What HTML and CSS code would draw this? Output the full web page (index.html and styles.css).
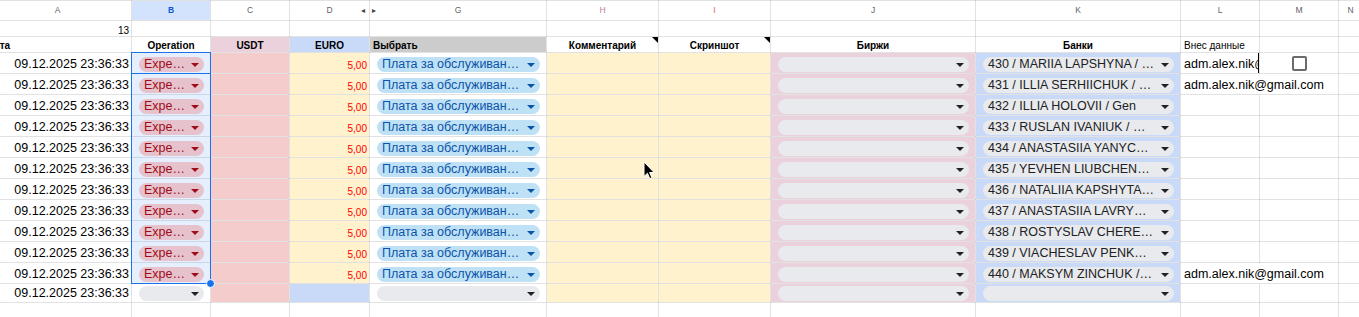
FILE: index.html
```html
<!DOCTYPE html>
<html lang="ru">
  <head>
    <meta charset="UTF-8" />
    <title>Операции</title>
    <link rel="stylesheet" href="styles.css">
  </head>
  <body>
    <div class="sheet">
      <table class="grid">
        <colgroup>
          <col class="w-a" /><col class="w-b" /><col class="w-c" /><col class="w-d" />
          <col class="w-g" /><col class="w-h" /><col class="w-i" /><col class="w-j" />
          <col class="w-k" /><col class="w-l" /><col class="w-m" /><col class="w-n" />
        </colgroup>
        <thead>
          <tr class="colhead">
            <th>A</th>
            <th class="active">B</th>
            <th>C</th>
            <th class="hide-left">D<span class="arr-l">&#9666;</span></th>
            <th class="hide-right"><span class="arr-r">&#9656;</span>G</th>
            <th class="mark-h">H</th>
            <th class="mark-i">I</th>
            <th>J</th>
            <th>K</th>
            <th>L</th>
            <th>M</th>
            <th>N</th>
          </tr>
        </thead>
        <tbody>
          <tr class="r-top">
            <td class="num">13</td>
            <td></td><td></td><td></td><td></td><td></td><td></td><td></td><td></td><td></td><td></td><td></td>
          </tr>
          <tr class="r-head">
            <td class="h-left">Дата</td>
            <td>Operation</td>
            <td class="bg-mauve">USDT</td>
            <td class="bg-blue">EURO</td>
            <td class="h-left bg-grey">Выбрать</td>
            <td class="noted">Комментарий</td>
            <td class="noted">Скриншот</td>
            <td>Биржи</td>
            <td>Банки</td>
            <td class="h-left h-thin">Внес данные</td>
            <td></td>
            <td></td>
          </tr>

          <tr class="row">
            <td class="date">09.12.2025 23:36:33</td>
            <td class="pick"><span class="chip chip-red"><span class="chip-text">Expe…</span><i class="caret"></i></span></td>
            <td class="bg-pink"></td>
            <td class="euro">5,00</td>
            <td class="pick"><span class="chip chip-blue"><span class="chip-text">Плата за обслуживан…</span><i class="caret"></i></span></td>
            <td class="bg-yellow"></td>
            <td class="bg-yellow"></td>
            <td class="pick bg-mauve"><span class="chip chip-grey"><span class="chip-text"></span><i class="caret"></i></span></td>
            <td class="pick bg-blue"><span class="chip chip-grey"><span class="chip-text">430 / MARIIA LAPSHYNA / …</span><i class="caret"></i></span></td>
            <td class="mail editing">adm.alex.nik@gmail.com</td>
            <td class="box"><span class="check"></span></td>
            <td></td>
          </tr>
          <tr class="row">
            <td class="date">09.12.2025 23:36:33</td>
            <td class="pick"><span class="chip chip-red"><span class="chip-text">Expe…</span><i class="caret"></i></span></td>
            <td class="bg-pink"></td>
            <td class="euro">5,00</td>
            <td class="pick"><span class="chip chip-blue"><span class="chip-text">Плата за обслуживан…</span><i class="caret"></i></span></td>
            <td class="bg-yellow"></td>
            <td class="bg-yellow"></td>
            <td class="pick bg-mauve"><span class="chip chip-grey"><span class="chip-text"></span><i class="caret"></i></span></td>
            <td class="pick bg-blue"><span class="chip chip-grey"><span class="chip-text">431 / ILLIA SERHIICHUK / …</span><i class="caret"></i></span></td>
            <td class="mail spill">adm.alex.nik@gmail.com</td>
            <td></td>
            <td></td>
          </tr>
          <tr class="row">
            <td class="date">09.12.2025 23:36:33</td>
            <td class="pick"><span class="chip chip-red"><span class="chip-text">Expe…</span><i class="caret"></i></span></td>
            <td class="bg-pink"></td>
            <td class="euro">5,00</td>
            <td class="pick"><span class="chip chip-blue"><span class="chip-text">Плата за обслуживан…</span><i class="caret"></i></span></td>
            <td class="bg-yellow"></td>
            <td class="bg-yellow"></td>
            <td class="pick bg-mauve"><span class="chip chip-grey"><span class="chip-text"></span><i class="caret"></i></span></td>
            <td class="pick bg-blue"><span class="chip chip-grey"><span class="chip-text">432 / ILLIA HOLOVII / Gen</span><i class="caret"></i></span></td>
            <td></td>
            <td></td>
            <td></td>
          </tr>
          <tr class="row">
            <td class="date">09.12.2025 23:36:33</td>
            <td class="pick"><span class="chip chip-red"><span class="chip-text">Expe…</span><i class="caret"></i></span></td>
            <td class="bg-pink"></td>
            <td class="euro">5,00</td>
            <td class="pick"><span class="chip chip-blue"><span class="chip-text">Плата за обслуживан…</span><i class="caret"></i></span></td>
            <td class="bg-yellow"></td>
            <td class="bg-yellow"></td>
            <td class="pick bg-mauve"><span class="chip chip-grey"><span class="chip-text"></span><i class="caret"></i></span></td>
            <td class="pick bg-blue"><span class="chip chip-grey"><span class="chip-text">433 / RUSLAN IVANIUK / …</span><i class="caret"></i></span></td>
            <td></td>
            <td></td>
            <td></td>
          </tr>
          <tr class="row">
            <td class="date">09.12.2025 23:36:33</td>
            <td class="pick"><span class="chip chip-red"><span class="chip-text">Expe…</span><i class="caret"></i></span></td>
            <td class="bg-pink"></td>
            <td class="euro">5,00</td>
            <td class="pick"><span class="chip chip-blue"><span class="chip-text">Плата за обслуживан…</span><i class="caret"></i></span></td>
            <td class="bg-yellow"></td>
            <td class="bg-yellow"></td>
            <td class="pick bg-mauve"><span class="chip chip-grey"><span class="chip-text"></span><i class="caret"></i></span></td>
            <td class="pick bg-blue"><span class="chip chip-grey"><span class="chip-text">434 / ANASTASIIA YANYC…</span><i class="caret"></i></span></td>
            <td></td>
            <td></td>
            <td></td>
          </tr>
          <tr class="row">
            <td class="date">09.12.2025 23:36:33</td>
            <td class="pick"><span class="chip chip-red"><span class="chip-text">Expe…</span><i class="caret"></i></span></td>
            <td class="bg-pink"></td>
            <td class="euro">5,00</td>
            <td class="pick"><span class="chip chip-blue"><span class="chip-text">Плата за обслуживан…</span><i class="caret"></i></span></td>
            <td class="bg-yellow"></td>
            <td class="bg-yellow"></td>
            <td class="pick bg-mauve"><span class="chip chip-grey"><span class="chip-text"></span><i class="caret"></i></span></td>
            <td class="pick bg-blue"><span class="chip chip-grey"><span class="chip-text">435 / YEVHEN LIUBCHEN…</span><i class="caret"></i></span></td>
            <td></td>
            <td></td>
            <td></td>
          </tr>
          <tr class="row">
            <td class="date">09.12.2025 23:36:33</td>
            <td class="pick"><span class="chip chip-red"><span class="chip-text">Expe…</span><i class="caret"></i></span></td>
            <td class="bg-pink"></td>
            <td class="euro">5,00</td>
            <td class="pick"><span class="chip chip-blue"><span class="chip-text">Плата за обслуживан…</span><i class="caret"></i></span></td>
            <td class="bg-yellow"></td>
            <td class="bg-yellow"></td>
            <td class="pick bg-mauve"><span class="chip chip-grey"><span class="chip-text"></span><i class="caret"></i></span></td>
            <td class="pick bg-blue"><span class="chip chip-grey"><span class="chip-text">436 / NATALIIA KAPSHYTA…</span><i class="caret"></i></span></td>
            <td></td>
            <td></td>
            <td></td>
          </tr>
          <tr class="row">
            <td class="date">09.12.2025 23:36:33</td>
            <td class="pick"><span class="chip chip-red"><span class="chip-text">Expe…</span><i class="caret"></i></span></td>
            <td class="bg-pink"></td>
            <td class="euro">5,00</td>
            <td class="pick"><span class="chip chip-blue"><span class="chip-text">Плата за обслуживан…</span><i class="caret"></i></span></td>
            <td class="bg-yellow"></td>
            <td class="bg-yellow"></td>
            <td class="pick bg-mauve"><span class="chip chip-grey"><span class="chip-text"></span><i class="caret"></i></span></td>
            <td class="pick bg-blue"><span class="chip chip-grey"><span class="chip-text">437 / ANASTASIIA LAVRY…</span><i class="caret"></i></span></td>
            <td></td>
            <td></td>
            <td></td>
          </tr>
          <tr class="row">
            <td class="date">09.12.2025 23:36:33</td>
            <td class="pick"><span class="chip chip-red"><span class="chip-text">Expe…</span><i class="caret"></i></span></td>
            <td class="bg-pink"></td>
            <td class="euro">5,00</td>
            <td class="pick"><span class="chip chip-blue"><span class="chip-text">Плата за обслуживан…</span><i class="caret"></i></span></td>
            <td class="bg-yellow"></td>
            <td class="bg-yellow"></td>
            <td class="pick bg-mauve"><span class="chip chip-grey"><span class="chip-text"></span><i class="caret"></i></span></td>
            <td class="pick bg-blue"><span class="chip chip-grey"><span class="chip-text">438 / ROSTYSLAV CHERE…</span><i class="caret"></i></span></td>
            <td></td>
            <td></td>
            <td></td>
          </tr>
          <tr class="row">
            <td class="date">09.12.2025 23:36:33</td>
            <td class="pick"><span class="chip chip-red"><span class="chip-text">Expe…</span><i class="caret"></i></span></td>
            <td class="bg-pink"></td>
            <td class="euro">5,00</td>
            <td class="pick"><span class="chip chip-blue"><span class="chip-text">Плата за обслуживан…</span><i class="caret"></i></span></td>
            <td class="bg-yellow"></td>
            <td class="bg-yellow"></td>
            <td class="pick bg-mauve"><span class="chip chip-grey"><span class="chip-text"></span><i class="caret"></i></span></td>
            <td class="pick bg-blue"><span class="chip chip-grey"><span class="chip-text">439 / VIACHESLAV PENK…</span><i class="caret"></i></span></td>
            <td></td>
            <td></td>
            <td></td>
          </tr>
          <tr class="row">
            <td class="date">09.12.2025 23:36:33</td>
            <td class="pick"><span class="chip chip-red"><span class="chip-text">Expe…</span><i class="caret"></i></span></td>
            <td class="bg-pink"></td>
            <td class="euro">5,00</td>
            <td class="pick"><span class="chip chip-blue"><span class="chip-text">Плата за обслуживан…</span><i class="caret"></i></span></td>
            <td class="bg-yellow"></td>
            <td class="bg-yellow"></td>
            <td class="pick bg-mauve"><span class="chip chip-grey"><span class="chip-text"></span><i class="caret"></i></span></td>
            <td class="pick bg-blue"><span class="chip chip-grey"><span class="chip-text">440 / MAKSYM ZINCHUK /…</span><i class="caret"></i></span></td>
            <td class="mail spill">adm.alex.nik@gmail.com</td>
            <td></td>
            <td></td>
          </tr>

          <!-- new row, nothing picked yet -->
          <tr class="row row-last">
            <td class="date">09.12.2025 23:36:33</td>
            <td class="pick"><span class="chip chip-grey"><span class="chip-text"></span><i class="caret"></i></span></td>
            <td class="bg-pink"></td>
            <td class="bg-blue"></td>
            <td class="pick"><span class="chip chip-grey"><span class="chip-text"></span><i class="caret"></i></span></td>
            <td class="bg-yellow"></td>
            <td class="bg-yellow"></td>
            <td class="pick bg-mauve"><span class="chip chip-grey"><span class="chip-text"></span><i class="caret"></i></span></td>
            <td class="pick bg-blue"><span class="chip chip-grey"><span class="chip-text"></span><i class="caret"></i></span></td>
            <td></td>
            <td></td>
            <td></td>
          </tr>
          <tr class="row-empty">
            <td></td><td></td><td></td><td></td><td></td><td></td><td></td><td></td><td></td><td></td><td></td><td></td>
          </tr>
        </tbody>
      </table>

      <!-- selection of B3:B13 -->
      <div class="sel-range"></div>
      <div class="sel-active"></div>
      <div class="sel-handle"></div>

      <svg class="pointer" width="13" height="19" viewBox="0 0 13 19">
        <path d="M1 1 L1 15.5 L4.4 12.3 L6.8 17.6 L8.9 16.7 L6.6 11.5 L11.2 11.5 Z" fill="#000" stroke="#fff" stroke-width="1" />
      </svg>
    </div>
  </body>
</html>
```

FILE: styles.css
```css
body {
  margin: 0;
  background: #fff;
  font-family: "Liberation Sans", Arial, sans-serif;
  overflow: hidden;
}

.sheet {
  position: relative;
  width: 1359px;
  height: 317px;
  overflow: hidden;
}

.grid {
  border-collapse: collapse;
  table-layout: fixed;
  width: 1379px;
  margin-left: -17px;
}

.w-a { width: 148px; }
.w-b { width: 79px; }
.w-c { width: 79px; }
.w-d { width: 80px; }
.w-g { width: 177px; }
.w-h { width: 112px; }
.w-i { width: 112px; }
.w-j { width: 205px; }
.w-k { width: 205px; }
.w-l { width: 79px; }
.w-m { width: 79px; }
.w-n { width: 24px; }

.grid th,
.grid td {
  border: 1px solid rgba(0, 0, 0, 0.115);
  padding: 0 3px;
  white-space: nowrap;
  overflow: hidden;
  vertical-align: bottom;
}

/* column letters */
.colhead th {
  height: 14px;
  padding-bottom: 5px;
  font-size: 8.5px;
  font-weight: normal;
  color: #5f6368;
  text-align: center;
  position: relative;
}

.colhead th.active {
  background: #d3e3fd;
  color: #0b57d0;
  font-weight: bold;
}

.colhead .mark-h { color: #c27ba0; }
.colhead .mark-i { color: #e06666; }

.arr-l,
.arr-r {
  position: absolute;
  top: 5px;
  font-size: 8px;
  color: #444;
}

.arr-l { right: 4px; }
.arr-r { left: 2px; }

.r-top td {
  height: 15px;
  padding-right: 2px;
  font-size: 10px;
  text-align: right;
}

.r-head td {
  height: 14px;
  padding-bottom: 1px;
  font-size: 10px;
  font-weight: bold;
  text-align: center;
  color: #000;
}

.r-head .h-left { text-align: left; }
.r-head .h-thin { font-weight: normal; }

.r-head .noted { position: relative; }

.r-head .noted::after {
  content: "";
  position: absolute;
  top: 0;
  right: 0;
  border-top: 6px solid #000;
  border-left: 6px solid transparent;
}

/* data rows */
.row td {
  height: 18px;
  font-size: 12.5px;
  color: #000;
  padding: 0 2px 2px 3px;
}

.row-last td { height: 16px; }
.row-empty td { height: 30px; border-bottom: none; }

.row .date { text-align: right; }

.row .euro {
  background: #fff2cc;
  color: #ff0000;
  font-size: 10px;
  text-align: right;
}

.row .pick { padding: 0 6px 1px 7px; }

.row .mail.spill {
  overflow: visible;
  border-right-style: hidden;
}

.row .editing { box-shadow: inset -1px 0 0 #000; }

.row .box {
  text-align: center;
  vertical-align: middle;
  padding-bottom: 0;
}

.check {
  display: inline-block;
  width: 11px;
  height: 11px;
  border: 2px solid #6b6b6b;
  border-radius: 2px;
  vertical-align: middle;
}

.bg-pink { background: #f4cccc; }
.bg-mauve { background: #ead1dc; }
.bg-blue { background: #c9daf8; }
.bg-yellow { background: #fff2cc; }
.bg-grey { background: #cccccc; }

/* dropdown chips */
.chip {
  display: flex;
  align-items: center;
  height: 15px;
  padding: 0 5px;
  border-radius: 8px;
  font-size: 12.5px;
  line-height: 15px;
}

.chip-text {
  flex: 1;
  overflow: hidden;
  white-space: nowrap;
}

.caret {
  flex-shrink: 0;
  width: 0;
  height: 0;
  margin-left: 4px;
  border-left: 4px solid transparent;
  border-right: 4px solid transparent;
  border-top: 4px solid currentColor;
}

.chip-red { background: #ffcfc9; color: #b10202; }
.chip-blue { background: #bfe1f6; color: #0a53a8; }
.chip-grey { background: #e8eaed; color: #202124; }

/* selection overlay */
.sel-range {
  position: absolute;
  left: 131px;
  top: 52px;
  width: 78px;
  height: 230px;
  border: 1px solid #1a73e8;
  background: rgba(14, 101, 235, 0.1);
}

.sel-active {
  position: absolute;
  left: 131px;
  top: 52px;
  width: 78px;
  height: 20px;
  border: 1px solid #1a73e8;
}

.sel-handle {
  position: absolute;
  left: 206px;
  top: 279px;
  width: 7px;
  height: 7px;
  border-radius: 50%;
  background: #1a73e8;
  border: 1px solid #fff;
}

.pointer {
  position: absolute;
  left: 643px;
  top: 161px;
}
```
